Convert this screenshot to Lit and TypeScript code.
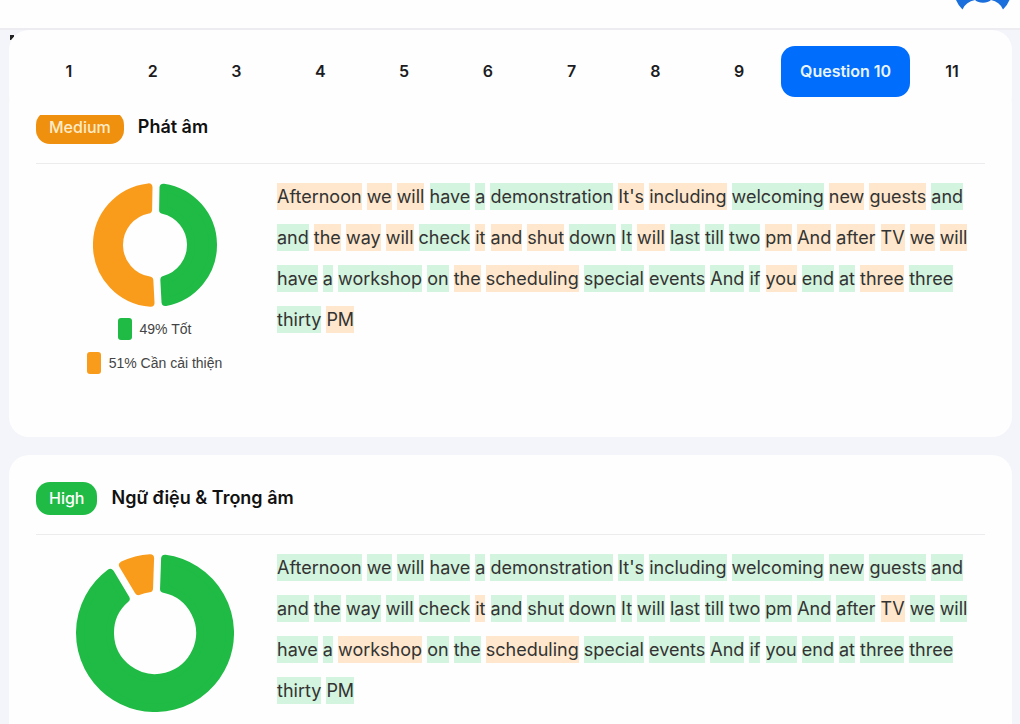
import { LitElement, html, svg, css, nothing } from "lit";
import { customElement, property, state } from "lit/decorators.js";
import { classMap } from "lit/directives/class-map.js";

type Segment = { from: number; to: number; tone: "good" | "weak" };
type Legend = { tone: "good" | "weak"; label: string };
type Report = {
  level: string;
  tone: "good" | "weak";
  title: string;
  size: number;
  hole: number;
  segments: Segment[];
  legend: Legend[];
  words: string;
};

// Words that need improvement carry a leading "*".
const REPORTS: Report[] = [
  {
    level: "Medium",
    tone: "weak",
    title: "Phát âm",
    size: 124,
    hole: 32,
    segments: [
      { from: 1, to: 177, tone: "good" },
      { from: 177, to: 361, tone: "weak" },
    ],
    legend: [
      { tone: "good", label: "49% Tốt" },
      { tone: "weak", label: "51% Cần cải thiện" },
    ],
    words:
      "*Afternoon *we *will have a demonstration *It's *including welcoming *new *guests and " +
      "and *the *way *will check *it *and *shut down It *will last till two *pm *And *after *TV *we *will " +
      "have a workshop on *the *scheduling special events And if *you end at *three three thirty *PM",
  },
  {
    level: "High",
    tone: "good",
    title: "Ngữ điệu & Trọng âm",
    size: 158,
    hole: 41,
    segments: [
      { from: 2, to: 329, tone: "good" },
      { from: 329, to: 362, tone: "weak" },
    ],
    legend: [],
    words:
      "Afternoon we will have a demonstration It's including welcoming new guests and " +
      "and the way will check *it and shut down It will last till two pm And after *TV we will " +
      "have a *workshop on the *scheduling special events And if you end at three three thirty PM",
  },
];

@customElement("donut-chart")
export class DonutChart extends LitElement {
  @property({ type: Number }) size = 124;
  @property({ type: Number }) hole = 32;
  @property({ attribute: false }) segments: Segment[] = [];

  static styles = css`
    :host { display: block; }
    svg { display: block; }
    path { stroke-width: 8; stroke-linejoin: round; }
    .good { fill: #1fbb45; stroke: #1fbb45; }
    .weak { fill: #f99c1c; stroke: #f99c1c; }
  `;

  // The outline is inset by half the stroke, so the round joins give soft corners.
  private outline(s: Segment) {
    const inset = 4;
    const pad = 3.5 + inset;
    const outer = this.size / 2 - inset;
    const inner = this.hole + inset;
    const rad = Math.PI / 180;
    const at = (r: number, deg: number, side: number) => {
      const a = deg * rad + side * Math.asin(pad / r);
      return `${(r * Math.sin(a)).toFixed(2)} ${(-r * Math.cos(a)).toFixed(2)}`;
    };
    const big = (r: number) => ((s.to - s.from) * rad - 2 * Math.asin(pad / r) > Math.PI ? 1 : 0);
    return `M${at(outer, s.from, 1)}A${outer} ${outer} 0 ${big(outer)} 1 ${at(outer, s.to, -1)}L${at(inner, s.to, -1)}A${inner} ${inner} 0 ${big(inner)} 0 ${at(inner, s.from, 1)}Z`;
  }

  render() {
    const h = this.size / 2;
    return html`<svg width=${this.size} height=${this.size} viewBox="${-h} ${-h} ${this.size} ${this.size}" aria-hidden="true">
      ${this.segments.map((s) => svg`<path class=${s.tone} d=${this.outline(s)}></path>`)}
    </svg>`;
  }
}

@customElement("report-card")
export class ReportCard extends LitElement {
  @property({ attribute: false }) report!: Report;

  static styles = css`
    :host {
      display: block;
      box-sizing: border-box;
      min-height: 353px;
      padding: 27px 27px 24px;
      border-radius: 20px;
      background: #fefefe;
    }
    .head {
      display: flex;
      align-items: flex-start;
      gap: 14px;
      padding-bottom: 19px;
      border-bottom: 1px solid #ececef;
    }
    .badge {
      padding: 0 13px;
      border-radius: 14px;
      font-size: 16px;
      font-weight: 500;
      line-height: 33px;
      color: #fff;
    }
    .badge.good { background: #1fbb45; }
    .badge.weak { background: #f0900f; color: #fdecc8; }
    h2 {
      margin: 0;
      font-size: 18px;
      font-weight: 600;
      line-height: 32px;
      color: #111;
    }
    .body {
      display: grid;
      grid-template-columns: 237px minmax(0, 1fr);
      column-gap: 4px;
      padding-top: 12px;
    }
    .chart {
      display: flex;
      flex-direction: column;
      align-items: center;
      padding-top: 7px;
    }
    ul {
      display: flex;
      flex-direction: column;
      align-items: center;
      gap: 12px;
      margin: 11px 0 0;
      padding: 0;
      list-style: none;
      font-family: "Liberation Sans", Arial, sans-serif;
      font-size: 14px;
      line-height: 22px;
      color: #444;
    }
    li { display: flex; gap: 8px; }
    .swatch { width: 14px; height: 22px; border-radius: 3px; }
    .swatch.good { background: #1fbb45; }
    .swatch.weak { background: #f99c1c; }
    p {
      margin: 0;
      font-size: 18px;
      line-height: 41px;
      color: #333;
    }
    .word { padding: 3px 0; }
    .word.good { background: #d3f4de; }
    .word.weak { background: #fee7cc; }
  `;

  render() {
    const r = this.report;
    return html`
      <div class="head">
        <span class="badge ${r.tone}">${r.level}</span>
        <h2>${r.title}</h2>
      </div>
      <div class="body">
        <div class="chart">
          <donut-chart .size=${r.size} .hole=${r.hole} .segments=${r.segments}></donut-chart>
          ${r.legend.length
            ? html`<ul>
                ${r.legend.map((l) => html`<li><span class="swatch ${l.tone}"></span>${l.label}</li>`)}
              </ul>`
            : nothing}
        </div>
        <p>
          ${r.words.split(" ").map((w) => {
            const weak = w.startsWith("*");
            return html`<span class="word ${weak ? "weak" : "good"}">${weak ? w.slice(1) : w}</span> `;
          })}
        </p>
      </div>
    `;
  }
}

@customElement("app-root")
export class AppRoot extends LitElement {
  @state() private current = 10;

  static styles = css`
    :host {
      display: block;
      height: 100vh;
      overflow: hidden;
      background: #f4f5fa;
      font-family: Inter, "Noto Sans", sans-serif;
    }
    header {
      display: flex;
      justify-content: flex-end;
      height: 28px;
      padding-right: 10px;
      border-bottom: 2px solid #ededf1;
      background: #fefefe;
    }
    .avatar { display: block; width: 54px; height: 12px; }
    main {
      position: relative;
      padding: 0 8px 0 9px;
    }
    .mark {
      position: absolute;
      left: 10px;
      top: 5px;
      width: 4px;
      height: 7px;
    }
    nav {
      position: relative;
      display: flex;
      padding: 16px 18px 18px;
      border-radius: 20px;
      background: #fefefe;
    }
    button {
      flex: 1 1 0;
      height: 51px;
      padding: 0 0 2px;
      border: 0;
      border-radius: 14px;
      background: none;
      font: 600 16px/24px Inter, "Noto Sans", sans-serif;
      color: #1c1c1e;
      cursor: pointer;
    }
    button.active {
      flex: none;
      padding: 0 19px 2px;
      background: #006dfc;
      color: #e9f5ff;
    }
    .cards {
      display: flex;
      flex-direction: column;
      gap: 18px;
      margin-top: -31px;
    }
  `;

  render() {
    const numbers = Array.from({ length: 11 }, (_, i) => i + 1);
    return html`
      <header>
        <svg class="avatar" viewBox="0 0 54 12" aria-hidden="true">
          <path fill="#1b6fdc" d="M0 0H19Q10 1.5 6.5 9.5Q2.5 6 0 0ZM35 0H53.5Q51 6 47 9.5Q43.5 1.5 35 0ZM19 0H35Q32 2.8 27 2.8Q22 2.8 19 0Z" />
        </svg>
      </header>
      <main>
        <svg class="mark" viewBox="0 0 4 7" aria-hidden="true"><path fill="#222" d="M0 0H4V2L1 5H0Z" /></svg>
        <nav aria-label="Questions">
          ${numbers.map(
            (n) => html`<button
              class=${classMap({ active: n === this.current })}
              @click=${() => (this.current = n)}
            >${n === this.current ? `Question ${n}` : n}</button>`
          )}
        </nav>
        <div class="cards">
          ${REPORTS.map((r) => html`<report-card .report=${r}></report-card>`)}
        </div>
      </main>
    `;
  }
}
